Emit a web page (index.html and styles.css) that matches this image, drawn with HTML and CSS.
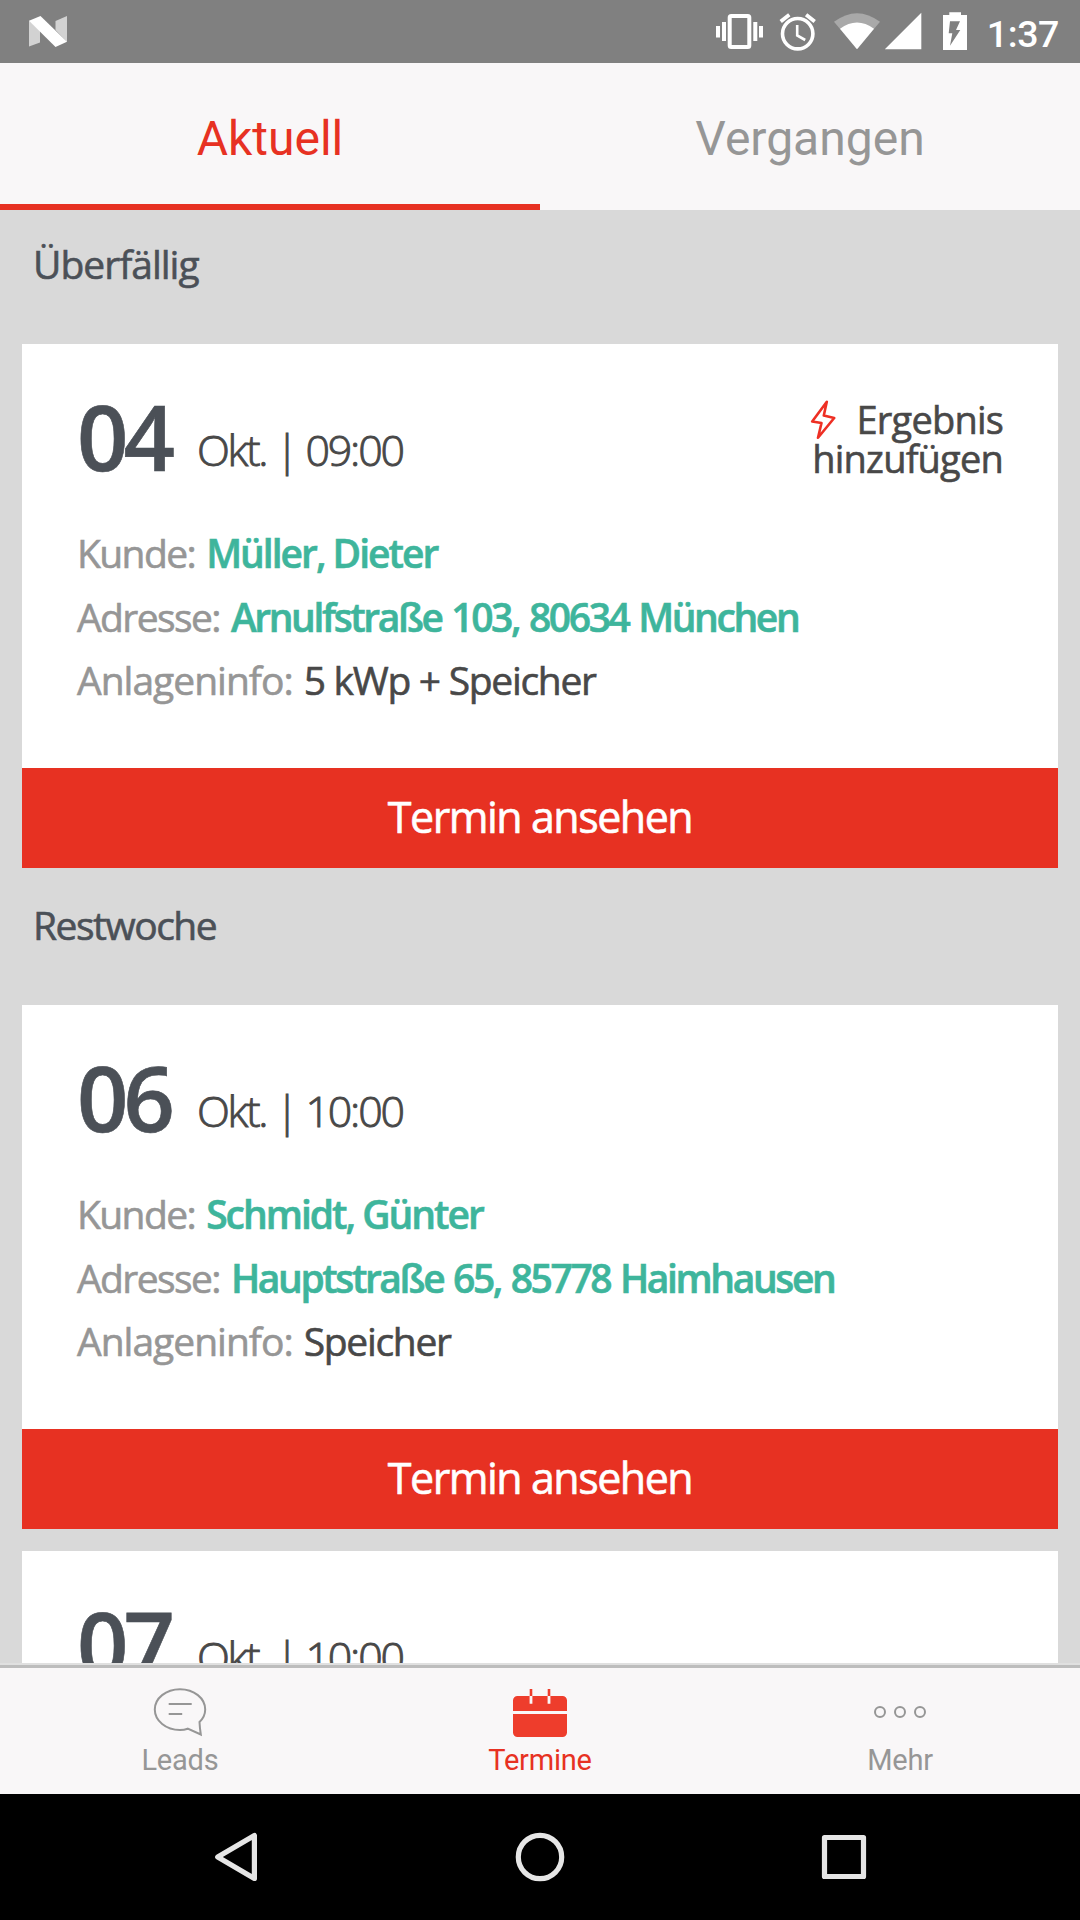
FILE: index.html
```html
<!DOCTYPE html>
<html lang="de">
<head>
    <meta charset="UTF-8">
    <meta name="viewport" content="width=device-width, initial-scale=1.0">
    <title>Termine</title>
    <link rel="stylesheet" href="styles.css">
</head>
<body>

<div class="status-bar">
    <svg class="logo" width="40" height="63" viewBox="0 0 40 63">
        <path d="M1 20.5 12 30v12.5L1 46.5z" fill="#d2d2d2"/>
        <path d="M27.5 21 39 16v26L27.5 30z" fill="#d2d2d2"/>
        <path d="M1 20.7 12.5 16 39 41.7 27.5 47z" fill="#fff"/>
    </svg>
    <div class="status-icons">
        <svg width="52" height="63" viewBox="0 0 52 63">
            <rect x="15.7" y="16" width="19.6" height="31" rx="1.5" fill="none" stroke="#fff" stroke-width="4"/>
            <path d="M2 26h4v11.5H2zM8 22h4v19H8zM39.3 22h4v19h-4zM45 26h4v11.5h-4z" fill="#fff"/>
        </svg>
        <svg width="66" height="63" viewBox="-12 0 66 63" fill="none" stroke="#fff">
            <circle cx="19.7" cy="33.7" r="15.2" stroke-width="3.6"/>
            <path d="M2.7 21.5 11.3 14.8M28.1 14.8l8.6 6.7" stroke-width="3.8"/>
            <path d="M19.2 25v10.5l8 4.5" stroke-width="2.6"/>
        </svg>
        <svg width="51" height="63" viewBox="0 0 51 63">
            <path d="M2 21.8Q25 4.5 48 21.8L25 49.3z" fill="#a9a9a9"/>
            <path d="M8 28.8Q25 16 42 28.8L25 49.3z" fill="#fff"/>
        </svg>
        <svg width="58" height="63" viewBox="0 0 58 63"><path d="M1.8 49.3 38.3 12.7v36.6z" fill="#fff"/></svg>
        <svg width="46" height="63" viewBox="0 0 46 63">
            <path d="M2 15h6.3v-2.7H20V15h6v35H2z" fill="#fff"/>
            <path d="M9 21.3h10l-4 8.7h4.3L9 45.7l2.3-12.4H7.7z" fill="#808080"/>
        </svg>
    </div>
    <span class="clock">1:37</span>
</div>

<div class="tabs">
    <div class="tab active">Aktuell</div>
    <div class="tab">Vergangen</div>
</div>

<div class="list">
    <div class="section first">Überfällig</div>
    <div class="card">
        <div class="card-head">
            <span class="day">04</span>
            <span class="time">Okt. | 09:00</span>
            <div class="result">
                <svg class="bolt" width="26" height="40" viewBox="0 0 26 40"><path d="M16.8 1.8 2.2 21.5l9.3 1.5L8 37.8 24.2 18l-10.4-2.5z"/></svg>Ergebnis<br>hinzufügen
            </div>
        </div>
        <div class="row"><span class="label">Kunde:</span><span class="link">Müller, Dieter</span></div>
        <div class="row"><span class="label">Adresse:</span><span class="link address">Arnulfstraße 103, 80634 München</span></div>
        <div class="row"><span class="label info">Anlageninfo:</span><span class="value">5 kWp + Speicher</span></div>
        <div class="btn">Termin ansehen</div>
    </div>

    <div class="section">Restwoche</div>
    <div class="card">
        <div class="card-head">
            <span class="day">06</span>
            <span class="time">Okt. | 10:00</span>
        </div>
        <div class="row"><span class="label">Kunde:</span><span class="link">Schmidt, Günter</span></div>
        <div class="row"><span class="label">Adresse:</span><span class="link address">Hauptstraße 65, 85778 Haimhausen</span></div>
        <div class="row"><span class="label info">Anlageninfo:</span><span class="value">Speicher</span></div>
        <div class="btn">Termin ansehen</div>
    </div>
    <div class="card">
        <div class="card-head">
            <span class="day">07</span>
            <span class="time">Okt. | 10:00</span>
        </div>
    </div>
</div>

<div class="bottom-nav">
    <div class="nav-item">
        <svg width="60" height="52" viewBox="0 0 60 52" fill="none" stroke="#969696" stroke-width="2">
            <path d="M37.7 42.7C35 43.7 33 44 30 44 16 44 4.8 34.8 4.8 23.5S16 3.2 30 3.2s25.2 9 25.2 20.3c0 4.5-2 9-5.7 12.5.2 4 .6 8 1.3 12.5z"/>
            <path d="M18.7 18h23M18.7 28h13.5"/>
        </svg>
        <span>Leads</span>
    </div>
    <div class="nav-item active">
        <svg width="60" height="52" viewBox="0 0 60 52">
            <path d="M3 25V14.5A4.5 4.5 0 0 1 7.5 10h45a4.5 4.5 0 0 1 4.5 4.5V25zM3 28h54v18.5a4.5 4.5 0 0 1-4.5 4.5h-45A4.5 4.5 0 0 1 3 46.5z" fill="#ee3d2c"/>
            <path d="M21 3v7M39 3v7" stroke="#ee3d2c" stroke-width="2.6"/>
            <path d="M21 10v7.7M39 10v7.7" stroke="#f9f7f8" stroke-width="2.8"/>
        </svg>
        <span>Termine</span>
    </div>
    <div class="nav-item">
        <svg width="60" height="52" viewBox="0 0 60 52" fill="none" stroke="#969696" stroke-width="2">
            <circle cx="10" cy="26" r="5"/>
            <circle cx="30" cy="26" r="5"/>
            <circle cx="50" cy="26" r="5"/>
        </svg>
        <span>Mehr</span>
    </div>
</div>

<div class="system-nav">
    <svg width="54" height="54" viewBox="0 0 54 54"><path d="M8.7 27 45.4 5.5v43z"/></svg>
    <svg width="54" height="54" viewBox="0 0 54 54"><circle cx="27" cy="27" r="21.7"/></svg>
    <svg width="54" height="54" viewBox="0 0 54 54"><rect x="7.5" y="7.5" width="39" height="39"/></svg>
</div>

</body>
</html>
```

FILE: styles.css
```css
:root { --red: #e73122; --grey: #969696; --dark: #4b5057; --teal: #3eb59c; --bar: #f9f7f8; }
* { box-sizing: border-box; }
body { margin: 0; width: 1080px; height: 1920px; overflow: hidden; display: flex; flex-direction: column; background: #d9d9d9; font-family: "Open Sans", "Noto Sans", sans-serif; color: #484848; }
svg { display: block; flex: none; }

/* Status bar */
.status-bar { height: 63px; flex: none; background: #808080; display: flex; align-items: center; padding: 0 21px 0 28px; }
.status-icons { display: flex; margin-left: auto; }
.clock { font-family: Roboto, sans-serif; font-size: 37.5px; font-weight: 500; line-height: 60px; padding-top: 4px; letter-spacing: -0.4px; color: #fff; }

/* Tabs */
.tabs { height: 147px; flex: none; display: flex; background: var(--bar); position: relative; z-index: 1; }
.tab { flex: 1; padding-top: 4px; border-bottom: 6px solid transparent; text-align: center; font-family: Roboto, sans-serif; font-size: 48px; line-height: 143px; color: var(--grey); }
.tab.active { color: var(--red); border-color: var(--red); }

/* Appointment list */
.list { flex: 1; min-height: 0; margin-top: -3px; padding: 0 22px; overflow: hidden; -webkit-text-stroke: 0.6px; }
.section { height: 137px; padding: 31px 11px 0; font-size: 39px; line-height: 52px; letter-spacing: -1.5px; color: var(--dark); }
.section.first { letter-spacing: -1px; }
.card { height: 524px; margin-bottom: 22px; background: #fff; display: flex; flex-direction: column; }
.card:has(+ .section) { margin-bottom: 0; }
.card-head { height: 177px; flex: none; padding: 47px 55px 0; display: flex; }
.day { font-size: 90px; font-weight: 600; line-height: 90px; letter-spacing: -5px; color: var(--dark); }
.time { margin: 14px 0 0 27px; font-size: 43px; font-weight: 300; line-height: 90px; letter-spacing: -2.2px; -webkit-text-stroke: 0.9px; }
.result { margin: 9px 0 0 auto; text-align: right; font-size: 38px; line-height: 39px; letter-spacing: -0.8px; }
.bolt { display: inline-block; vertical-align: 4px; margin: -20px 21px -10px 0; fill: none; stroke: #ee2f24; stroke-width: 2.6; stroke-linejoin: round; }
.row { padding: 0 55px; display: flex; gap: 11px; font-size: 39px; line-height: 63.5px; white-space: nowrap; }
.label { color: var(--grey); letter-spacing: -1.6px; }
.label.info { letter-spacing: -1px; }
.link { color: var(--teal); font-weight: 600; letter-spacing: -2px; }
.link.address { letter-spacing: -2.4px; word-spacing: 2px; }
.value { letter-spacing: -1.3px; }
.btn { height: 100px; margin-top: auto; background: var(--red); color: #fff; text-align: center; font-size: 43px; line-height: 97px; letter-spacing: -1.5px; }

/* App navigation */
.bottom-nav { height: 129px; flex: none; display: flex; background: var(--bar); border-top: 3px solid #bdbdbd; box-shadow: 0 -2px 0 #e0e0e0; }
.nav-item { flex: 1; display: flex; flex-direction: column; align-items: center; padding-top: 18px; font-family: Roboto, sans-serif; font-size: 29px; line-height: 45px; letter-spacing: -0.2px; color: var(--grey); }
.nav-item.active { color: var(--red); }

/* Android buttons */
.system-nav { height: 126px; flex: none; background: #000; display: flex; justify-content: center; align-items: center; gap: 250px; }
.system-nav svg { fill: none; stroke: #e6e6e6; stroke-width: 5.2; stroke-linejoin: round; }
```
